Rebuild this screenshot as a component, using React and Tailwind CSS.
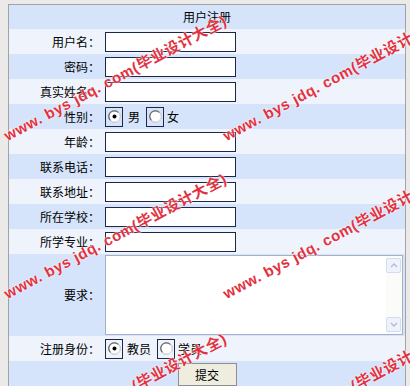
import React from "react";

const font = { fontFamily: '"Noto Sans CJK SC", "Liberation Sans", sans-serif' };

const rows = [
  "用户名",
  "密码",
  "真实姓名",
  "性别",
  "年龄",
  "联系电话",
  "联系地址",
  "所在学校",
  "所学专业",
];

function Radio({ checked }) {
  return (
    <span className="flex h-[20px] w-[18px] items-center justify-center border border-[#1c2848] bg-transparent">
      <svg width="13" height="13" viewBox="0 0 13 13">
        <circle cx="6.5" cy="6.5" r="5.8" fill="#fff" stroke="#9a9a9a" strokeWidth="1" />
        <path d="M2.4 10.2 A5.5 5.5 0 0 1 10.2 2.4" fill="none" stroke="#6e6e6e" strokeWidth="1.2" />
        <path d="M10.6 2.8 A5.5 5.5 0 0 1 2.8 10.6" fill="none" stroke="#e8e8e8" strokeWidth="1" />
        {checked && <circle cx="6.5" cy="6.5" r="2" fill="#000" />}
      </svg>
    </span>
  );
}

function Row({ label, dark, children, h = "h-[25px]" }) {
  return (
    <div className={`flex ${h} ${dark ? "bg-[#d5e4fa]" : "bg-[#eef3fc]"}`}>
      <div className="flex w-[93px] items-center justify-end pr-[2px]">{label}：</div>
      <div className="flex flex-1 items-center pl-[3px]">{children}</div>
    </div>
  );
}

// red diagonal watermark lines that sit over the form
function Mark({ className }) {
  return (
    <div
      className={
        "pointer-events-none absolute origin-bottom-left -rotate-[28deg] whitespace-nowrap text-[15px] font-bold leading-[16px] tracking-[0.6px] text-[#e2323f] [text-shadow:0_0_2px_#fff,0_0_1px_#fff] " +
        className
      }
      style={{ fontFamily: '"Liberation Sans", "Noto Sans CJK SC", sans-serif' }}
    >
      www. bys jdq. com(毕业设计大全)
    </div>
  );
}

export default function App() {
  return (
    <div className="relative h-[386px] w-[410px] overflow-hidden bg-[#ebeae8] text-[12px] text-black" style={font}>
      <div className="ml-[8px] mt-[4px] w-[398px] border border-[#a3a3a6]">
        <div className="flex h-[24px] items-center justify-center bg-[#d5e4fa]">用户注册</div>

        {rows.map((label, i) => (
          <Row key={label} label={label} dark={i % 2 === 1}>
            {label === "性别" ? (
              <div className="flex items-center">
                <Radio checked />
                <span className="ml-[5px]">男</span>
                <span className="ml-[6px]">
                  <Radio />
                </span>
                <span className="ml-[3px]">女</span>
              </div>
            ) : (
              <input
                type={label === "密码" ? "password" : "text"}
                className="h-[20px] w-[131px] border border-[#1c2848] bg-white outline-none"
              />
            )}
          </Row>
        ))}

        <Row label="要求" dark h="h-[82px]">
          <div className="flex h-[80px] w-[298px] border border-[#a5b1c4] bg-white">
            <textarea className="h-full flex-1 resize-none bg-white outline-none" />
            <div className="flex w-[16px] flex-col justify-between bg-[#fbfbf9] py-[2px]">
              <div className="flex h-[15px] w-[15px] items-center justify-center rounded-[2px] border border-[#d2dcee] bg-[#eef2fb]">
                <svg width="8" height="5" viewBox="0 0 8 5">
                  <path d="M1 4 L4 1 L7 4" fill="none" stroke="#b4bccb" strokeWidth="1.4" />
                </svg>
              </div>
              <div className="flex h-[15px] w-[15px] items-center justify-center rounded-[2px] border border-[#d2dcee] bg-[#eef2fb]">
                <svg width="8" height="5" viewBox="0 0 8 5">
                  <path d="M1 1 L4 4 L7 1" fill="none" stroke="#b4bccb" strokeWidth="1.4" />
                </svg>
              </div>
            </div>
          </div>
        </Row>

        <Row label="注册身份">
          <div className="flex items-center">
            <Radio checked />
            <span className="ml-[4px]">教员</span>
            <span className="ml-[6px]">
              <Radio />
            </span>
            <span className="ml-[3px]">学员</span>
          </div>
        </Row>

        <div className="flex h-[30px] justify-center bg-[#d5e4fa] pt-[2px]">
          <button className="h-[23px] w-[59px] border border-[#8e8f8f] bg-[#efedde] text-[12px]" style={font}>
            提交
          </button>
        </div>
      </div>

      <Mark className="left-[9px] top-[128px]" />
      <Mark className="left-[228px] top-[128px]" />
      <Mark className="left-[9px] top-[286px]" />
      <Mark className="left-[228px] top-[286px]" />
      <Mark className="left-[9px] top-[446px]" />
      <Mark className="left-[228px] top-[446px]" />
    </div>
  );
}
